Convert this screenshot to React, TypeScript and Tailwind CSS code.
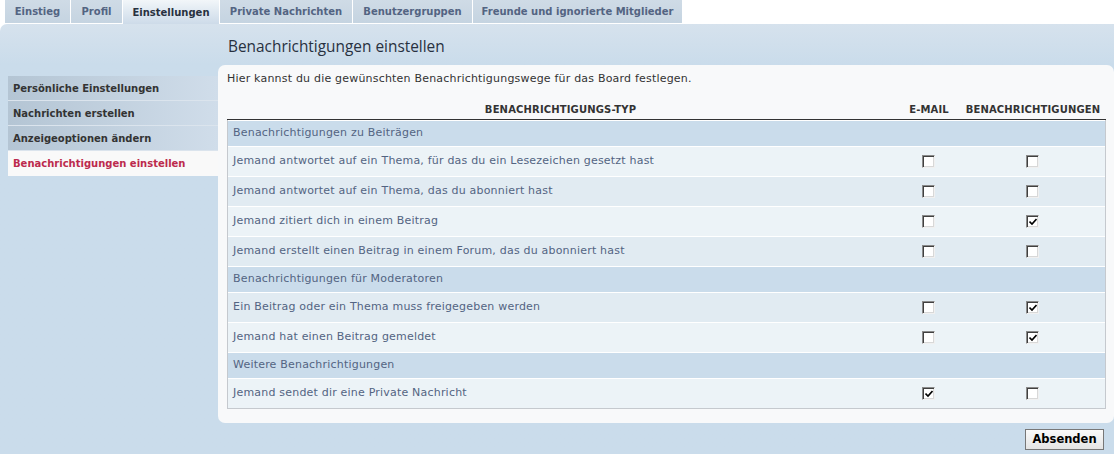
import React from 'react';

const tabs = [
  { label: 'Einstieg', w: 'w-[65px]' },
  { label: 'Profil', w: 'w-[51px]' },
  { label: 'Einstellungen', w: 'w-[96px]', active: true },
  { label: 'Private Nachrichten', w: 'w-[132px]' },
  { label: 'Benutzergruppen', w: 'w-[119px]' },
  { label: 'Freunde und ignorierte Mitglieder', w: 'w-[209px]' },
];

const navItems = [
  { label: 'Persönliche Einstellungen' },
  { label: 'Nachrichten erstellen' },
  { label: 'Anzeigeoptionen ändern' },
  { label: 'Benachrichtigungen einstellen', active: true },
];

type Row =
  | { kind: 'group'; label: string }
  | { kind: 'item'; label: string; email: boolean; notify: boolean; alt: boolean };

const rows: Row[] = [
  { kind: 'group', label: 'Benachrichtigungen zu Beiträgen' },
  { kind: 'item', label: 'Jemand antwortet auf ein Thema, für das du ein Lesezeichen gesetzt hast', email: false, notify: false, alt: false },
  { kind: 'item', label: 'Jemand antwortet auf ein Thema, das du abonniert hast', email: false, notify: false, alt: true },
  { kind: 'item', label: 'Jemand zitiert dich in einem Beitrag', email: false, notify: true, alt: false },
  { kind: 'item', label: 'Jemand erstellt einen Beitrag in einem Forum, das du abonniert hast', email: false, notify: false, alt: true },
  { kind: 'group', label: 'Benachrichtigungen für Moderatoren' },
  { kind: 'item', label: 'Ein Beitrag oder ein Thema muss freigegeben werden', email: false, notify: true, alt: true },
  { kind: 'item', label: 'Jemand hat einen Beitrag gemeldet', email: false, notify: true, alt: false },
  { kind: 'group', label: 'Weitere Benachrichtigungen' },
  { kind: 'item', label: 'Jemand sendet dir eine Private Nachricht', email: true, notify: false, alt: false },
];

function Checkbox({ checked }: { checked: boolean }) {
  return (
    <span className="relative inline-block w-[13px] h-[13px] border border-t-[#8a8a8a] border-l-[#8a8a8a] border-r-[#f0f0f0] border-b-[#f0f0f0] bg-white shadow-[inset_1px_1px_0_#404040,inset_-1px_-1px_0_#d8d8d8]">
      {checked && (
        <svg className="absolute left-[2px] top-[2px]" width="8" height="8" viewBox="0 0 8 8">
          <path d="M0.5 3.5 L3 6 L7.5 1" fill="none" stroke="#000" strokeWidth="1.6" />
        </svg>
      )}
    </span>
  );
}

export default function App() {
  return (
    <div className="w-[1114px] h-[454px] overflow-hidden bg-white flex flex-col font-['DejaVu_Sans',Verdana,sans-serif]">
      {/* Tabs */}
      <div className="flex items-start h-[24px] pl-[5px] gap-[1px]">
        {tabs.map((t) => (
          <div
            key={t.label}
            className={`${t.w} flex items-center justify-center text-[10px] font-bold whitespace-nowrap ${
              t.active
                ? 'h-[24px] bg-gradient-to-b from-[#f2f6f9] to-[#cddbe9] text-[#28313f]'
                : 'h-[23px] bg-gradient-to-b from-[#cfdbe6] to-[#c5d4e1] text-[#536482]'
            }`}
          >
            {t.label}
          </div>
        ))}
      </div>

      {/* Panel */}
      <div className="flex-1 flex flex-col bg-gradient-to-b from-[#d6e2ed] to-[#cadceb] to-[40px] rounded-tl-[7px]">
        <h2 className="pl-[228px] pt-[13px] h-[41px] text-[15.4px] leading-[20px] text-[#28313f] font-['Open_Sans',sans-serif]">
          Benachrichtigungen einstellen
        </h2>

        <div className="flex">
          {/* Navigation */}
          <div className="w-[218px] pl-[8px] pt-[11px] flex flex-col">
            {navItems.map((n) => (
              <div
                key={n.label}
                className={`h-[25px] pl-[5px] flex items-center text-[10px] font-bold border-b border-[#dbe4ed] ${
                  n.active
                    ? 'bg-[#f9f9f9] text-[#bc2a4d] border-transparent'
                    : 'bg-gradient-to-r from-[#b4c5d4] to-[#d0ddea] text-[#333333]'
                }`}
              >
                {n.label}
              </div>
            ))}
          </div>

          {/* Content */}
          <div className="flex-1 bg-[#f8f9fa] rounded-[7px] pt-[6px] pl-[9px] pr-[8px] pb-[14px]">
            <p className="text-[11px] leading-[16px] text-[#333333] tracking-[0.2px]">
              Hier kannst du die gewünschten Benachrichtigungswege für das Board festlegen.
            </p>

            <div className="mt-[12px] border-l border-r border-b border-[#c5c9ce]">
              <div className="flex h-[21px] items-center border-b border-[#333333] text-[10px] font-bold text-[#333333] bg-[#f8f9fa] -mx-[1px] tracking-[0.15px]">
                <div className="flex-1 text-center">BENACHRICHTIGUNGS-TYP</div>
                <div className="w-[70px] text-center">E-MAIL</div>
                <div className="w-[142px] text-center pr-[4px]">BENACHRICHTIGUNGEN</div>
              </div>
              {rows.map((r, i) =>
                r.kind === 'group' ? (
                  <div
                    key={i}
                    className="h-[26px] flex items-center pl-[5px] border-t border-white bg-[#cadceb] text-[11px] text-[#536482] tracking-[0.2px]"
                  >
                    {r.label}
                  </div>
                ) : (
                  <div
                    key={i}
                    className={`h-[30px] flex items-center border-t border-white text-[11px] text-[#536482] ${
                      r.alt ? 'bg-[#e1ebf2]' : 'bg-[#ecf3f7]'
                    }`}
                  >
                    <div className="flex-1 pl-[5px] tracking-[0.2px]">{r.label}</div>
                    <div className="w-[70px] flex justify-center">
                      <Checkbox checked={r.email} />
                    </div>
                    <div className="w-[142px] flex justify-center pr-[4px]">
                      <Checkbox checked={r.notify} />
                    </div>
                  </div>
                )
              )}
            </div>
          </div>
        </div>

        <div className="flex justify-end pr-[10px] pt-[6px]">
          <button className="h-[21px] w-[79px] border border-[#777777] bg-gradient-to-b from-[#fafafa] to-[#e4e4e4] text-[11.5px] font-bold text-black leading-none">
            Absenden
          </button>
        </div>
      </div>
    </div>
  );
}
